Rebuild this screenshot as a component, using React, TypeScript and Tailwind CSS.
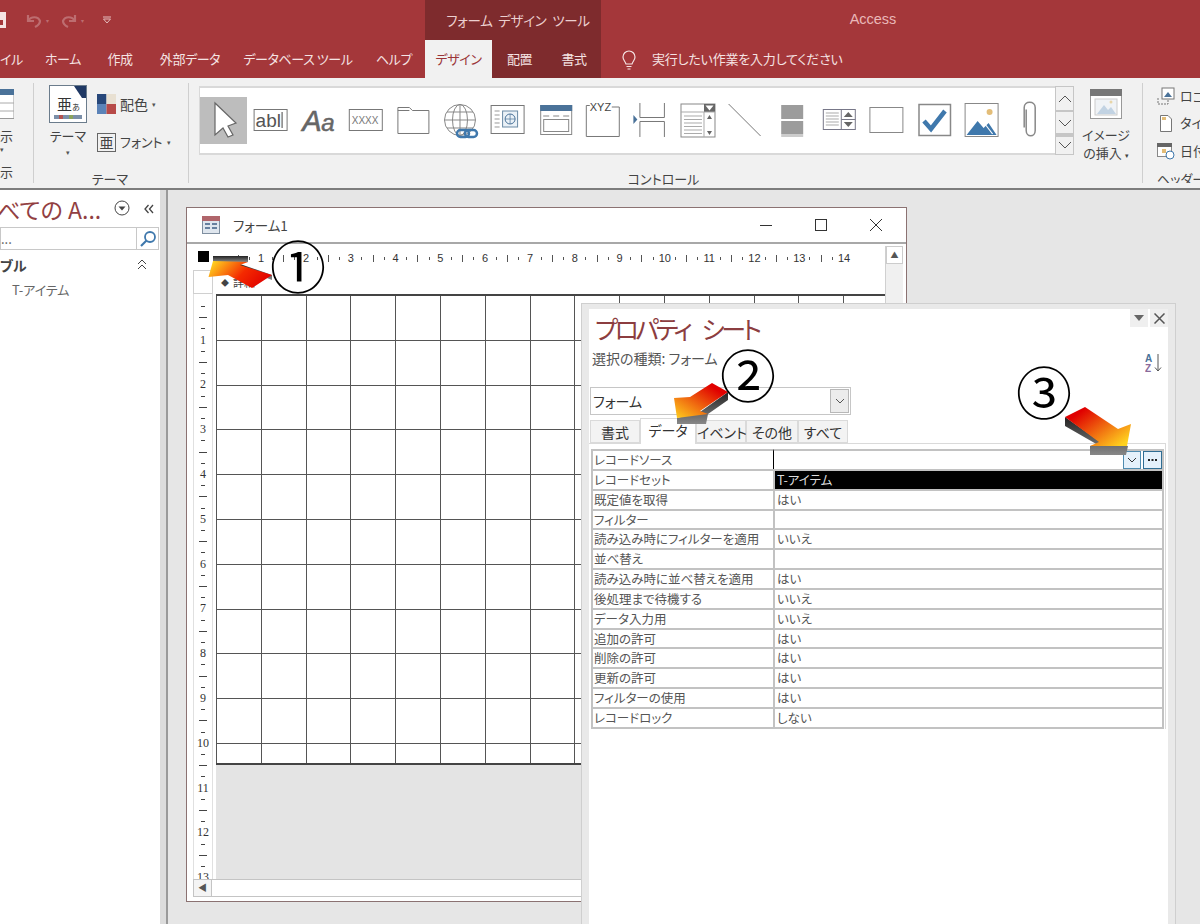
import type { ReactNode } from "react";

const tabs = [
  { label: "イル", w: "w-[33px]", left: true },
  { label: "ホーム", w: "w-[60px]", left: false },
  { label: "作成", w: "w-[54px]", left: false },
  { label: "外部データ", w: "w-[86px]", left: false },
  { label: "データベース ツール", w: "w-[130px]", left: false },
  { label: "ヘルプ", w: "w-[62px]", left: false },
];

const rows = [
  ["レコードソース", ""],
  ["レコードセット", "T-アイテム"],
  ["既定値を取得", "はい"],
  ["フィルター", ""],
  ["読み込み時にフィルターを適用", "いいえ"],
  ["並べ替え", ""],
  ["読み込み時に並べ替えを適用", "はい"],
  ["後処理まで待機する", "いいえ"],
  ["データ入力用", "いいえ"],
  ["追加の許可", "はい"],
  ["削除の許可", "はい"],
  ["更新の許可", "はい"],
  ["フィルターの使用", "はい"],
  ["レコードロック", "しない"],
];

const units = [1, 2, 3, 4, 5, 6, 7, 8, 9, 10, 11, 12, 13, 14];
const cells = Array.from({ length: 165 }, (_, i) => i);

// each gallery icon is drawn in page coordinates, the viewBox shifts per cell
function Tool({ i, children }: { i: number; children: ReactNode }) {
  const x = 200 + i * 47.4;
  return (
    <svg width="47.4" height="65" viewBox={`${x} 88 47.4 65`} className="shrink-0">
      {children}
    </svg>
  );
}

function Gallery() {
  const s = "#777";
  return (
    <div className="flex h-[69px] w-[856px] border-y-2 border-l border-[#d9d9d9] bg-white overflow-hidden">
      <Tool i={0}>
        <rect x="200" y="97" width="48" height="47" fill="#bdbdbd" />
        <path d="M215 103V135L223 128L228 137L233 135L228 126L236 123Z" fill="#fff" stroke="#666" strokeWidth="1.2" />
      </Tool>
      <Tool i={1}>
        <rect x="254.5" y="109.5" width="33" height="21" fill="#fff" stroke={s} />
        <text x="256" y="127" fontSize="19" fill="#555" fontFamily="Liberation Sans">abl</text>
        <path d="M282.5 112V128" stroke="#444" />
      </Tool>
      <Tool i={2}>
        <text x="302" y="131" fontSize="29" fontStyle="italic" fill="#666" stroke="#666" strokeWidth=".6" fontFamily="Liberation Sans">A</text>
        <text x="321" y="131" fontSize="24" fontStyle="italic" fill="#666" stroke="#666" strokeWidth=".5" fontFamily="Liberation Sans">a</text>
      </Tool>
      <Tool i={3}>
        <rect x="349.5" y="109.5" width="33" height="21" fill="#fff" stroke={s} />
        <text x="352" y="124" fontSize="10" fill="#777" fontFamily="Liberation Sans">XXXX</text>
      </Tool>
      <Tool i={4}>
        <path d="M397.5 133.5V107.5H409L412 110.5H428.5V133.5Z M409 110.5H397.5" fill="#fff" stroke={s} />
      </Tool>
      <Tool i={5}>
        <g fill="none" stroke="#888">
          <circle cx="460" cy="120" r="15.5" />
          <ellipse cx="460" cy="120" rx="7.5" ry="15.5" />
          <path d="M460 104.5V135.5M445 120H475M447 112H473M447 128H473" />
        </g>
        <g fill="none" stroke="#3f78ac" strokeWidth="2.5">
          <rect x="457" y="130" width="12" height="7" rx="3.5" />
          <rect x="465" y="130" width="12" height="7" rx="3.5" />
        </g>
      </Tool>
      <Tool i={6}>
        <rect x="491.5" y="105.5" width="33" height="28" fill="#fff" stroke={s} />
        <path d="M495 111H500M495 115H500M495 119H500M495 123H500M495 127H500" stroke="#999" />
        <rect x="503" y="111" width="15" height="16" fill="#eaf1f7" stroke="#6a8aa5" />
        <circle cx="510.5" cy="119" r="5" fill="none" stroke="#4a7299" />
        <path d="M505.5 119H515.5M510.5 114V124" stroke="#4a7299" strokeWidth=".7" />
      </Tool>
      <Tool i={7}>
        <rect x="540.5" y="105.5" width="31" height="29" fill="#fff" stroke="#888" />
        <rect x="540" y="105" width="32" height="6" fill="#4a7299" />
        <path d="M543 116H549M553 116H559M563 116H569" stroke="#888" />
        <rect x="543.5" y="119.5" width="25" height="12" fill="none" stroke="#888" />
      </Tool>
      <Tool i={8}>
        <path d="M590 105.5H586.5V136.5H619.5V107M612 107H619.5" fill="none" stroke={s} />
        <text x="590" y="111" fontSize="11" fill="#444" fontFamily="Liberation Sans">XYZ</text>
      </Tool>
      <Tool i={9}>
        <path d="M639.5 103V117.5H664M664 103V117.5M639.5 137V121.5H664M664 121.5V137" fill="none" stroke={s} />
        <path d="M633 115V124L637 119.5Z" fill="#4a7299" />
      </Tool>
      <Tool i={10}>
        <rect x="681" y="104" width="34" height="33" fill="#fff" stroke="#888" />
        <rect x="704" y="104" width="11" height="8" fill="#666" />
        <path d="M705.5 105.5L709.5 110.5L713.5 105.5Z" fill="#fff" />
        <path d="M681 112H715M704 112V137M684 116H702M684 119.5H702M684 123H702M684 126.5H702M684 130H702M684 133.5H702" stroke="#aaa" />
        <path d="M707 119L709.5 115L712 119ZM707 131L709.5 135L712 131Z" fill="#666" />
      </Tool>
      <Tool i={11}>
        <path d="M729 104L761 136" stroke="#777" />
      </Tool>
      <Tool i={12}>
        <rect x="781" y="105" width="22" height="14" fill="#9c9c9c" />
        <rect x="781" y="121" width="22" height="13" fill="#9c9c9c" />
        <rect x="781" y="134" width="22" height="3" fill="#ccc" />
      </Tool>
      <Tool i={13}>
        <rect x="823.5" y="109.5" width="32" height="20" fill="#fff" stroke="#778" />
        <path d="M826 113H839M826 116H839M826 119H839M826 122H839M826 125H839" stroke="#aaa" />
        <path d="M841.5 109.5V129.5M841.5 119.5H855.5" stroke="#778" />
        <path d="M844 117L848.5 112L853 117ZM844 122L848.5 127L853 122Z" fill="#666" />
      </Tool>
      <Tool i={14}>
        <rect x="870.5" y="107.5" width="33" height="25" fill="#fff" stroke="#888" />
      </Tool>
      <Tool i={15}>
        <rect x="919" y="104.5" width="31.5" height="31" fill="#fff" stroke="#888" strokeWidth="1.5" />
        <path d="M924 121L931 129L945 111" fill="none" stroke="#3f78ac" strokeWidth="4.5" />
      </Tool>
      <Tool i={16}>
        <rect x="965.5" y="103.5" width="33" height="33" fill="#fff" stroke="#888" />
        <circle cx="990" cy="112" r="3" fill="#e3bd78" />
        <path d="M967 135L978 121L984 128L989 123L997 135Z" fill="#3f78ac" />
        <path d="M983 121L993 134" stroke="#fff" strokeWidth="1.2" />
      </Tool>
      <Tool i={17}>
        <path d="M1026 110V131C1026 138 1035 138 1035 131V108C1035 101 1024 101 1024 108V128" fill="none" stroke="#888" strokeWidth="1.5" transform="translate(0 -.5)" />
      </Tool>
    </div>
  );
}

function ScrollBtn({ d, h }: { d: string; h: string }) {
  return (
    <div className={`${h} flex items-center justify-center border border-[#c6c6c6] bg-[#f1f1f1]`}>
      <svg width="16" height="12" viewBox="0 0 16 12">
        <path d={d} fill="none" stroke="#555" strokeWidth="1" />
      </svg>
    </div>
  );
}

function Ribbon() {
  return (
    <div className="flex h-[112px] bg-[#f1f1f1] border-b-2 border-[#7d7d7d] text-[13px] text-[#444]">
      <div className="w-[34px] shrink-0 border-r border-[#cfcfcf] mt-[5px] mb-[5px] relative">
        <svg width="14" height="30" viewBox="0 0 14 30" className="block mt-[6px]">
          <rect x="-2" y=".5" width="16" height="29" fill="#fff" stroke="#999" />
          <rect x="-2" y="0" width="16" height="6" fill="#4a7299" />
          <path d="M0 14H14M0 22H14" stroke="#aaa" />
        </svg>
        <div className="mt-[9px] leading-[16px]">示</div>
        <div className="text-[7px] leading-[10px] text-[#555]">▾</div>
        <div className="mt-[10px] leading-[16px]">示</div>
      </div>

      <div className="w-[155px] shrink-0 border-r border-[#cfcfcf] mt-[5px] mb-[5px] flex flex-col">
        <div className="flex h-[74px] pl-[15px]">
          <div className="w-[38px] flex flex-col items-center">
            <div className="w-[38px] h-[38px] mt-[2px] border border-[#6b7c8c] bg-white relative shrink-0">
              <svg width="36" height="36" viewBox="0 0 36 36">
                <path d="M24 0H36V12H32Z" fill="#1f3864" />
                <rect x="4" y="29" width="28" height="4" fill="#7b8fa8" />
                <rect x="9" y="29" width="4" height="4" fill="#b3534f" />
                <rect x="19" y="29" width="4" height="4" fill="#8aa35c" />
              </svg>
              <span className="absolute left-[7px] top-[9px] text-[15px] leading-[18px] text-[#333]">亜<span className="text-[8px]">あ</span></span>
            </div>
            <div className="mt-[5px] leading-[16px] whitespace-nowrap">テーマ</div>
            <div className="text-[7px] leading-[8px] mt-[4px] text-[#555]">▾</div>
          </div>
          <div className="ml-[10px] flex flex-col">
            <div className="flex items-center h-[22px] mt-[10px]">
              <svg width="19" height="20" viewBox="0 0 19 20" className="shrink-0">
                <rect width="9.5" height="10" fill="#27477a" />
                <rect x="9.5" width="9.5" height="10" fill="#e8e0d2" />
                <rect y="10" width="9.5" height="10" fill="#5b83b8" />
                <rect x="9.5" y="10" width="9.5" height="10" fill="#b74a48" />
              </svg>
              <span className="ml-[4px] text-[14px]">配色</span>
              <span className="ml-[4px] text-[7px] text-[#555]">▾</span>
            </div>
            <div className="flex items-center h-[22px] mt-[16px]">
              <span className="w-[19px] h-[19px] shrink-0 border border-[#666] text-[14px] leading-[17px] text-center">亜</span>
              <span className="ml-[4px] whitespace-nowrap">フォント</span>
              <span className="ml-[4px] text-[7px] text-[#555]">▾</span>
            </div>
          </div>
        </div>
        <div className="mt-auto mb-[-5px] text-center leading-[18px] pr-[2px]">テーマ</div>
      </div>

      <div className="w-[954px] shrink-0 border-r border-[#cfcfcf] mt-[5px] mb-[5px] flex flex-col">
        <div className="flex pl-[10px] mt-[3px]">
          <Gallery />
          <div className="w-[19px] h-[69px] flex flex-col">
            <ScrollBtn h="h-[25px]" d="M2 9L8 3L14 9" />
            <ScrollBtn h="h-[23px]" d="M2 3L8 9L14 3" />
            <ScrollBtn h="h-[21px] border-t-[3px]" d="M2 2L8 8L14 2" />
          </div>
          <div className="ml-[7px] w-[50px] flex flex-col items-center">
            <svg width="32" height="30" viewBox="0 0 32 30" className="block mt-[3px] shrink-0">
              <rect x=".5" y=".5" width="31" height="29" fill="#fff" stroke="#999" />
              <rect width="32" height="7" fill="#777" />
              <rect x="5" y="10" width="22" height="16" fill="#f0f3f6" stroke="#ccc" />
              <path d="M7 25L14 16L18 21L21 18L26 25Z" fill="#c2d3e3" />
              <circle cx="21" cy="13" r="1.5" fill="#e8d5a8" />
            </svg>
            <div className="mt-[7px] text-center text-[13px] leading-[18px] whitespace-nowrap">イメージ<br />の挿入 <span className="text-[7px]">▾</span></div>
          </div>
        </div>
        <div className="mt-auto mb-[-5px] text-center leading-[18px] pr-[4px]">コントロール</div>
      </div>

      <div className="flex-1 overflow-hidden mt-[5px] mb-[5px] pl-[14px] whitespace-nowrap flex flex-col">
        <div className="flex items-center h-[22px] mt-[2px]">
          <svg width="18" height="18" viewBox="0 0 18 18" className="shrink-0">
            <rect x="5" y="1" width="12" height="11" fill="#fff" stroke="#777" />
            <path d="M7 10L11 5L15 10Z" fill="#4a7299" />
            <path d="M1 11V17H11V13" fill="none" stroke="#777" strokeDasharray="2 1" />
          </svg>
          <span className="ml-[5px]">ロゴ</span>
        </div>
        <div className="flex items-center h-[22px] mt-[5px]">
          <svg width="18" height="18" viewBox="0 0 18 18" className="shrink-0">
            <path d="M3.5 1.5H11L14.5 5V17.5H3.5Z" fill="#fff" stroke="#777" />
            <rect x="5" y="3" width="4" height="3" fill="#e3bd78" />
          </svg>
          <span className="ml-[5px]">タイトル</span>
        </div>
        <div className="flex items-center h-[22px] mt-[6px]">
          <svg width="18" height="18" viewBox="0 0 18 18" className="shrink-0">
            <rect x=".5" y="1.5" width="14" height="13" fill="#fff" stroke="#888" />
            <rect y="1" width="15" height="4" fill="#666" />
            <rect x="5" y="7" width="4" height="4" fill="#e3bd78" />
            <circle cx="13" cy="13" r="4" fill="#fff" stroke="#3f78ac" />
          </svg>
          <span className="ml-[5px]">日付と時刻</span>
        </div>
        <div className="mt-auto mb-[-5px] leading-[18px]">ヘッダー/フッター</div>
      </div>
    </div>
  );
}

function NavPane() {
  return (
    <div className="w-[160px] shrink-0 bg-white overflow-hidden">
      <div className="flex items-center h-[37px] pt-[1px]">
        <span className="w-[116px] shrink-0 ml-[-3px] whitespace-nowrap text-[23px] leading-[34px] text-[#923f42]">べての A...</span>
        <svg width="18" height="18" viewBox="0 0 18 18" className="shrink-0 mt-[-2px]">
          <circle cx="9" cy="9" r="7" fill="none" stroke="#444" />
          <path d="M5.5 7.5H12.5L9 11.5Z" fill="#444" />
        </svg>
        <svg width="12" height="12" viewBox="0 0 12 12" className="ml-[12px] shrink-0">
          <path d="M5.5 2L2 6L5.5 10M10 2L6.5 6L10 10" fill="none" stroke="#444" strokeWidth="1.3" />
        </svg>
      </div>
      <div className="flex h-[23px] w-[159px] border border-[#c8c8c8] items-center">
        <span className="flex-1 text-[13px] leading-[18px] text-[#555]">...</span>
        <span className="w-[22px] h-[21px] flex items-center justify-center border-l border-[#c8c8c8]">
          <svg width="18" height="18" viewBox="0 0 18 18">
            <circle cx="11" cy="7" r="5" fill="none" stroke="#3f78ac" strokeWidth="1.8" />
            <path d="M7.5 10.5L2 16" stroke="#3f78ac" strokeWidth="2.2" />
          </svg>
        </span>
      </div>
      <div className="flex items-center h-[30px]">
        <span className="w-[137px] font-bold text-[14px] text-[#444]">ブル</span>
        <svg width="10" height="12" viewBox="0 0 10 12" className="shrink-0">
          <path d="M1 5L5 1L9 5M1 10L5 6L9 10" fill="none" stroke="#444" />
        </svg>
      </div>
      <div className="ml-[12px] text-[13px] leading-[20px] text-[#666]">T-アイテム</div>
    </div>
  );
}

function FormWindow() {
  return (
    <div className="absolute left-[186px] top-[207px] w-[721px] h-[695px] border border-[#8b7272] bg-[#ececec] flex flex-col overflow-hidden">
      <div className="h-[36px] shrink-0 flex items-center bg-white border-b-2 border-[#a8a8a8] pr-[24px]">
        <svg width="18" height="18" viewBox="0 0 18 18" className="ml-[15px] shrink-0">
          <rect x=".5" y=".5" width="17" height="17" fill="#dfe6ee" stroke="#7f8fa0" />
          <rect width="18" height="5" fill="#b0656b" />
          <path d="M3 8H8M3 12H8M10 8H15M10 12H15" stroke="#3f5f85" strokeWidth="1.5" />
        </svg>
        <span className="ml-[13px] text-[13.5px] text-[#444]">フォーム1</span>
        <svg width="12" height="12" viewBox="0 0 12 12" className="ml-auto shrink-0"><path d="M0 6.5H12" stroke="#333" /></svg>
        <svg width="12" height="12" viewBox="0 0 12 12" className="ml-[43px] shrink-0"><rect x=".5" y=".5" width="11" height="11" fill="none" stroke="#333" /></svg>
        <svg width="12" height="12" viewBox="0 0 12 12" className="ml-[43px] shrink-0"><path d="M0 0L12 12M12 0L0 12" stroke="#333" /></svg>
      </div>
      <div className="flex-1 min-h-0 bg-white flex flex-col pt-[2px]">
        <div className="flex-1 flex min-h-0">
          <div className="w-[23px] ml-[6px] shrink-0 flex flex-col min-h-0">
            <div className="h-[21px] w-[20px] shrink-0 flex items-center justify-center">
              <div className="w-[11px] h-[11px] bg-black" />
            </div>
            <div className="mt-[3px] w-[20px] h-[24px] shrink-0 border border-[#d0d0d0] bg-white" />
            <div className="w-[20px] flex-1 min-h-0 pt-[7px] overflow-hidden border-x border-[#e0e0e0] bg-white">
              {units.map((n) => (
                <div key={n} className="h-[44.8px] flex flex-col items-center text-[#333] font-['Liberation_Serif',serif]">
                  <span className="h-[11.2px] w-[4px] flex items-center"><i className="block w-[4px] h-[1px] bg-[#444]" /></span>
                  <span className="h-[11.2px] w-[8px] flex items-center"><i className="block w-[8px] h-[1px] bg-[#444]" /></span>
                  <span className="h-[11.2px] w-[4px] flex items-center"><i className="block w-[4px] h-[1px] bg-[#444]" /></span>
                  <span className="h-[11.2px] text-[12px] leading-[11.2px]">{n}</span>
                </div>
              ))}
            </div>
          </div>
          <div className="w-[669px] shrink-0 flex flex-col bg-white min-h-0">
            <div className="h-[25px] shrink-0 flex pl-[6px] overflow-hidden items-center text-[11px] text-[#333] font-['Liberation_Sans',sans-serif]">
              {units.map((n) => (
                <div key={n} className="w-[44.8px] shrink-0 flex items-center">
                  <span className="w-[11.2px] flex justify-center"><i className="block w-[1px] h-[3px] bg-[#555]" /></span>
                  <span className="w-[11.2px] flex justify-center"><i className="block w-[1px] h-[7px] bg-[#555]" /></span>
                  <span className="w-[11.2px] flex justify-center"><i className="block w-[1px] h-[3px] bg-[#555]" /></span>
                  <span className="w-[11.2px] text-center">{n}</span>
                </div>
              ))}
            </div>
            <div className="h-[23px] shrink-0 flex items-center pl-[5px] text-[11px] text-[#444]">
              <span className="text-[8px]">◆</span>
              <span className="ml-[4px]">詳細</span>
            </div>
            <div className="h-[471px] shrink-0 overflow-hidden grid grid-cols-[repeat(15,44.8px)] auto-rows-[44.8px] border-t-2 border-b-2 border-[#444] bg-white">
              {cells.map((c) => (
                <div key={c} className="border-l border-b border-[#555]" />
              ))}
            </div>
            <div className="flex-1 min-h-0 bg-[#e4e4e4]" />
          </div>
          <div className="w-[18px] shrink-0 bg-[#f0f0f0] border-l border-[#d0d0d0] flex flex-col">
            <div className="h-[18px] flex items-center justify-center text-[8px] leading-none text-[#555] bg-white border border-[#ccc]">▲</div>
          </div>
        </div>
        <div className="h-[18px] ml-[6px] mb-[4px] mr-[3px] shrink-0 border border-[#c4c4c4] bg-white flex">
          <div className="w-[18px] flex items-center justify-center border-r border-[#c4c4c4] bg-[#f4f4f4] text-[9px] text-[#555]">◀</div>
        </div>
      </div>
    </div>
  );
}

function PropertySheet() {
  return (
    <div className="absolute left-[581px] top-[303px] w-[595px] h-[640px] bg-[#e9e9e9] border-l border-t border-r border-[#cfcfcf] pt-[5px] px-[7px]">
      <div className="h-full bg-white relative">
        <div className="absolute right-0 top-0 flex">
          <div className="w-[18px] h-[18px] bg-[#efefef] flex items-center justify-center">
            <svg width="10" height="6" viewBox="0 0 10 6"><path d="M0 0H10L5 6Z" fill="#666" /></svg>
          </div>
          <div className="ml-[2px] w-[18px] h-[18px] bg-[#efefef] flex items-center justify-center">
            <svg width="11" height="11" viewBox="0 0 11 11"><path d="M.5 .5L10.5 10.5M10.5 .5L.5 10.5" stroke="#555" strokeWidth="1.5" /></svg>
          </div>
        </div>
        <div className="pl-[6px] pt-[2px] text-[25px] leading-[34px] tracking-[-3.4px] [word-spacing:10px] text-[#8c3d40] whitespace-nowrap">プロパティ シート</div>
        <div className="flex items-center justify-between pl-[3px] pr-[5px] h-[26px] text-[14px] text-[#555]">
          <span>選択の種類: フォーム</span>
          <svg width="18" height="20" viewBox="0 0 18 20" className="mt-[10px] shrink-0">
            <text x="0" y="9" fontSize="10" fontWeight="700" fill="#4a7299" fontFamily="Liberation Sans">A</text>
            <text x="0" y="19" fontSize="10" fontWeight="700" fill="#8a6a9a" fontFamily="Liberation Sans">Z</text>
            <path d="M13 1V18M10 14.5L13 18L16 14.5" fill="none" stroke="#555" />
          </svg>
        </div>
        <div className="ml-[1px] mt-[16px] w-[261px] h-[28px] border border-[#c6c6c6] flex items-center justify-between pl-[2px] pr-[1px] text-[14px] text-[#333]">
          <span>フォーム</span>
          <span className="w-[19px] h-[24px] border border-[#b8b8b8] bg-[#ececec] flex items-center justify-center">
            <svg width="10" height="6" viewBox="0 0 10 6"><path d="M1 1L5 5L9 1" fill="none" stroke="#555" /></svg>
          </span>
        </div>
        <div className="flex items-end h-[28px] pl-[1px] text-[14px] text-[#333]">
          <span className="w-[50px] h-[23px] border border-[#dadada] bg-[#f3f3f3] text-center leading-[22px]">書式</span>
          <span className="w-[56px] h-[26px] border border-b-0 border-[#dadada] bg-white text-center leading-[22px] mb-[-1px] relative">データ</span>
          <span className="w-[50px] h-[23px] border border-[#dadada] bg-[#f3f3f3] text-center leading-[22px] whitespace-nowrap">イベント</span>
          <span className="w-[52px] h-[23px] border border-[#dadada] bg-[#f3f3f3] text-center leading-[22px] whitespace-nowrap">その他</span>
          <span className="w-[50px] h-[23px] border border-[#dadada] bg-[#f3f3f3] text-center leading-[22px]">すべて</span>
        </div>
        <div className="border-t border-r border-[#dadada] w-[577px] pt-[5px] pl-[2px] pr-[1px] text-[12.5px] text-[#555]">
          {rows.map(([label, value], i) => (
            <div key={label} className="flex h-[19.85px]">
              <div className="w-[182px] shrink-0 border-2 border-r-0 border-b-0 border-[#c2c2c2] pl-[1px] leading-[17px] whitespace-nowrap overflow-hidden">{label}</div>
              <div className={`flex-1 border-2 border-b-0 border-[#c2c2c2] pl-[2px] leading-[17px] relative ${i === 1 ? "bg-black text-[#ddd]" : ""} ${i === 0 ? "border-l-black border-l" : ""}`}>
                {value}
                {i === 0 && (
                  <div className="absolute right-0 top-0 flex gap-[2px]">
                    <span className="w-[18px] h-[18px] border border-[#4f8cb0] bg-[#e5f1fb] flex items-center justify-center">
                      <svg width="10" height="6" viewBox="0 0 10 6"><path d="M1 1L5 5L9 1" fill="none" stroke="#333" /></svg>
                    </span>
                    <span className="w-[19px] h-[18px] border border-[#2f6d93] bg-[#e5f1fb] flex items-center justify-center">
                      <svg width="9" height="2" viewBox="0 0 9 2"><path d="M0 1H2M3.5 1H5.5M7 1H9" stroke="#222" strokeWidth="2" /></svg>
                    </span>
                  </div>
                )}
              </div>
            </div>
          ))}
          <div className="border-t-2 border-[#c2c2c2]" />
        </div>
      </div>
    </div>
  );
}

function Defs() {
  return (
    <svg width="0" height="0" className="absolute">
      <defs>
        <linearGradient id="arrowOne" x1="1" y1=".6" x2="0" y2=".2">
          <stop offset="0" stopColor="#e00000" />
          <stop offset=".45" stopColor="#f42a00" />
          <stop offset="1" stopColor="#ffd21f" />
        </linearGradient>
        <linearGradient id="arrowTwo" x1="1" y1="0" x2="0" y2="1">
          <stop offset=".2" stopColor="#e00000" />
          <stop offset="1" stopColor="#ffd21f" />
        </linearGradient>
        <linearGradient id="arrowThree" x1="0" y1="0" x2="1" y2=".8">
          <stop offset=".2" stopColor="#e00000" />
          <stop offset="1" stopColor="#ffd21f" />
        </linearGradient>
        <linearGradient id="edge" x1="0" y1="0" x2="0" y2="1">
          <stop offset="0" stopColor="#222" />
          <stop offset="1" stopColor="#888" />
        </linearGradient>
      </defs>
    </svg>
  );
}

function Marks() {
  return (
    <>
      <Defs />
      <svg width="80" height="36" viewBox="205 256 80 36" className="absolute left-[205px] top-[256px]">
        <path d="M213 256H248V262H213Z" fill="url(#edge)" />
        <path d="M240 264L272 275V280L236 266Z" fill="url(#edge)" />
        <path d="M208.5 277L213 261L248 262L240 265L272 275L252 288L228 275Z" fill="url(#arrowOne)" />
      </svg>
      <svg width="60" height="46" viewBox="672 382 60 46" className="absolute left-[672px] top-[382px]">
        <path d="M677 418V424H706L708 414L728 400V392L700 412Z" fill="url(#edge)" />
        <path d="M674 398L677 418L708 414L700 411L728 392L712 383L690 397Z" fill="url(#arrowTwo)" />
      </svg>
      <svg width="70" height="52" viewBox="1064 406 70 52" className="absolute left-[1064px] top-[406px]">
        <path d="M1065 417V426L1098 445L1090 446V455H1126L1128 446L1099 441Z" fill="url(#edge)" />
        <path d="M1131 424L1127 446L1090 446L1099 442L1065 417L1085 407L1118 429Z" fill="url(#arrowThree)" />
      </svg>
      <span className="absolute left-[270px] top-[226px] text-[56px] leading-[76px] text-black">①</span>
      <span className="absolute left-[720px] top-[335px] text-[56px] leading-[76px] text-black">②</span>
      <span className="absolute left-[1016px] top-[352px] text-[56px] leading-[76px] text-black">③</span>
    </>
  );
}

export default function App() {
  return (
    <div className="relative w-[1200px] h-[924px] overflow-hidden bg-[#e6e6e6] [font-feature-settings:'palt'] font-['Noto_Sans_CJK_JP','Liberation_Sans',sans-serif]">
      <div className="h-[78px] bg-[#a4373a] text-[13px] text-[#f5e3e3]">
        <div className="flex h-[40px]">
          <div className="w-[425px] shrink-0 flex items-center">
            <svg width="6" height="16" viewBox="0 0 6 16" className="shrink-0"><rect width="6" height="16" fill="#f5e3e3" /><rect y="8" width="3" height="5" fill="#a4373a" /></svg>
            <svg width="20" height="16" viewBox="0 0 20 16" className="ml-[18px] shrink-0"><path d="M4 3V9H10M4 9C7 4 14 4 16 9C16 12 13 14 11 15" fill="none" stroke="#bd6d70" strokeWidth="2.2" /></svg>
            <span className="text-[6px] ml-[2px] text-[#bd6d70]">▾</span>
            <svg width="20" height="16" viewBox="0 0 20 16" className="ml-[10px] shrink-0"><path d="M16 3V9H10M16 9C13 4 6 4 4 9C4 12 7 14 9 15" fill="none" stroke="#bd6d70" strokeWidth="2.2" /></svg>
            <span className="text-[6px] ml-[2px] text-[#bd6d70]">▾</span>
            <svg width="10" height="8" viewBox="0 0 10 8" className="ml-[18px] shrink-0"><path d="M1 1H9M1.5 3L5 7L8.5 3Z" fill="none" stroke="#e3bcbc" /></svg>
          </div>
          <div className="w-[176px] shrink-0 pl-[10px] bg-[#7e2b2d] flex items-center justify-center whitespace-nowrap text-[#eccfcf] text-[13.5px] [word-spacing:3px] tracking-[-0.3px]">フォーム デザイン ツール</div>
          <div className="flex-1 flex items-center justify-center pr-[55px] text-[#eab8b8] font-['Liberation_Sans',sans-serif] text-[14.5px]">Access</div>
        </div>
        <div className="flex h-[38px] whitespace-nowrap tracking-[-0.4px]">
          {tabs.map((t) => (
            <div key={t.label} className={`${t.w} shrink-0 flex items-center ${t.left ? "" : "justify-center"}`}>{t.label}</div>
          ))}
          <div className="w-[176px] shrink-0 flex bg-[#7e2b2d]">
            <div className="w-[67px] bg-[#f1f1f1] text-[#9b3538] flex items-center justify-center">デザイン</div>
            <div className="w-[55px] flex items-center justify-center">配置</div>
            <div className="w-[54px] flex items-center justify-center">書式</div>
          </div>
          <svg width="16" height="20" viewBox="0 0 16 20" className="ml-[20px] mt-[10px] shrink-0">
            <path d="M5 14C4 11 2 10 2 7A6 6 0 0 1 14 7C14 10 12 11 11 14ZM5.5 16.5H10.5M6.5 19H9.5" fill="none" stroke="#f5e3e3" strokeWidth="1.2" />
          </svg>
          <div className="ml-[15px] flex items-center text-[#f5e3e3] tracking-[-0.2px]">実行したい作業を入力してください</div>
        </div>
      </div>
      <Ribbon />
      <div className="flex h-[734px]">
        <NavPane />
        <div className="w-[8px] shrink-0 bg-[#dcdcdc] border-r-2 border-[#9a9a9a]" />
        <div className="flex-1 bg-[#e6e6e6]" />
      </div>
      <FormWindow />
      <PropertySheet />
      <Marks />
    </div>
  );
}
